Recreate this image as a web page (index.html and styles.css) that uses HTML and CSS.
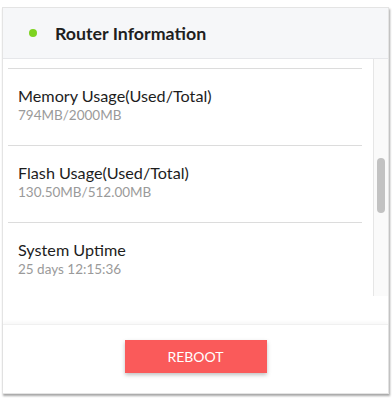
FILE: index.html
```html
<!DOCTYPE html>
<html lang="en">
<head>
    <meta charset="UTF-8">
    <meta name="viewport" content="width=device-width, initial-scale=1.0">
    <title>Router Information</title>
    <link rel="stylesheet" href="styles.css">
</head>
<body>
    <!-- router info card -->
    <div class="card">
        <div class="card-header">
            <span class="status-dot"></span>
            <span class="card-title">Router Information</span>
        </div>

        <!-- list + scrollbar side by side -->
        <div class="card-body">
            <div class="info-list">
                <div class="info-item">
                    <div class="info-label">Memory Usage(Used/Total)</div>
                    <div class="info-value">794MB/2000MB</div>
                </div>
                <div class="info-item">
                    <div class="info-label">Flash Usage(Used/Total)</div>
                    <div class="info-value">130.50MB/512.00MB</div>
                </div>
                <div class="info-item">
                    <div class="info-label">System Uptime</div>
                    <div class="info-value">25 days 12:15:36</div>
                </div>
            </div>
            <div class="scroll-track">
                <div class="scroll-thumb"></div>
            </div>
        </div>

        <div class="card-footer">
            <button class="reboot-button">REBOOT</button>
        </div>
    </div>
</body>
</html>
```

FILE: styles.css
```css
body {
    margin: 0;
    padding: 7px 3px 7px 2px;
    font-family: Lato, "Noto Sans", sans-serif;
    background-color: #ffffff;
}

/* card frame */
.card {
    border: 1px solid #e4e4e4;
    background-color: #fff;
    box-shadow: 1px 2px 2px rgba(0, 0, 0, 0.35);
}

.card-header {
    display: flex;
    align-items: center;
    height: 50px;
    background-color: #f6f7f9;
    border-bottom: 1px solid #e6e7ea;
    padding-left: 26px;
}

.status-dot {
    width: 8px;
    height: 8px;
    border-radius: 50%;
    background-color: #7ed321;
    margin-right: 18px;
}

.card-title {
    font-size: 17.8px;
    font-weight: bold;
    color: #1f1f1f;
}

/* list area */
.card-body {
    display: flex;
    padding-bottom: 28px;
}

.info-list {
    flex: 1;
    height: 237px;
    box-sizing: border-box;
    overflow: hidden;
    padding: 9px 11px 0 5px;
}

.info-item {
    border-top: 1px solid #dcdcdc;
    padding: 17px 0 20px 10px;
}

.info-label {
    font-size: 16.2px;
    line-height: 20px;
    color: #1d1d1d;
}

.info-value {
    font-size: 13.5px;
    line-height: 19px;
    color: #9a9a9a;
}

/* scrollbar look-alike */
.scroll-track {
    width: 14px;
    height: 237px;
    background-color: #fafafa;
    border-left: 1px solid #e6e6e6;
}

.scroll-thumb {
    width: 8px;
    height: 55px;
    margin: 99px 0 0 3px;
    border-radius: 4px;
    background-color: #c2c2c2;
}

/* footer with reboot button */
.card-footer {
    display: flex;
    justify-content: center;
    padding: 15px 0 20px;
    border-top: 1px solid #f0f0f0;
    box-shadow: 0 -2px 3px rgba(0, 0, 0, 0.03);
}

.reboot-button {
    width: 142px;
    height: 33px;
    border: none;
    background-color: #fa5a5a;
    color: #fff;
    font-family: Lato, "Noto Sans", sans-serif;
    font-size: 14px;
    box-shadow: 0 2px 4px rgba(0, 0, 0, 0.25);
    cursor: pointer;
}
```
